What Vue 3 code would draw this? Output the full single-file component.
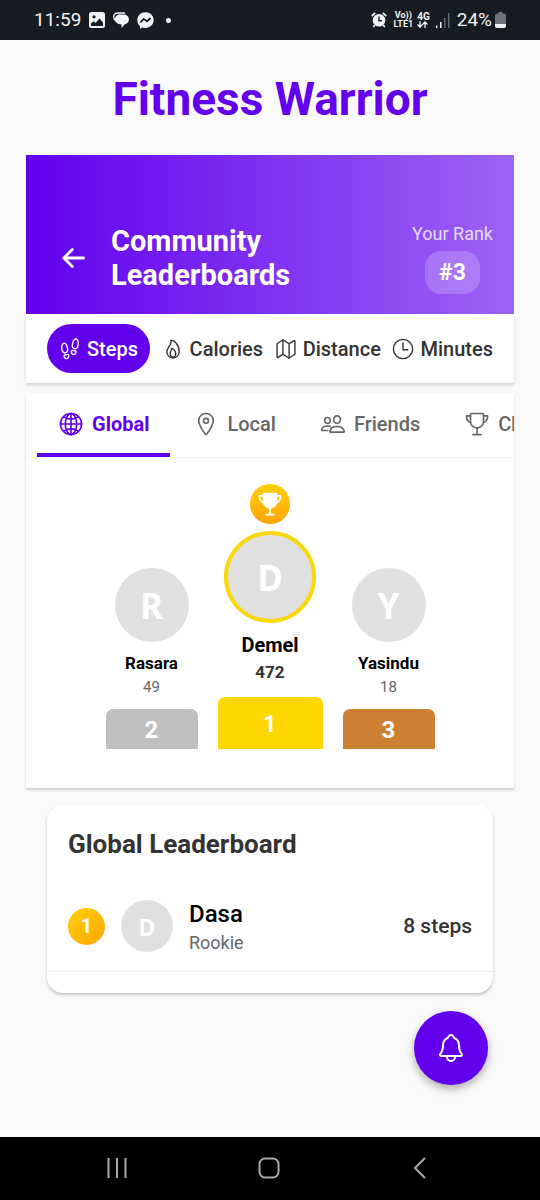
<script setup>
import { ref } from 'vue'

const icons = {
  footsteps: [
    'M200 246.84c8.81 58.62-7.33 90.67-52.91 97.41-50.65 7.49-71.52-26.44-80.33-84.84-11.84-78.56 11.66-134.25 49-139.41 47.33-6.53 74.87 55.87 84.24 126.84z',
    'M223.65 409.53c3.13 33.28-14.86 64.34-42 69.66-27.4 5.36-58.71-16.37-65.09-49.19s17.75-34.56 47.32-40.21 55.99-20.4 59.77 19.74z',
    'M312 150.83c-8.81 58.62 7.33 90.67 52.9 97.41 50.66 7.49 71.52-26.44 80.33-84.84 11.84-78.55-11.66-134.25-49-139.41C348.92 17.46 321.37 79.87 312 150.83z',
    'M288.35 313.53c-3.13 33.27 14.86 64.34 42 69.69 27.4 5.36 58.71-16.37 65.09-49.19s-17.75-34.56-47.32-40.22-55.99-20.4-59.77 19.72z'
  ],
  flame: [
    'M112 320c0-93 124-165 96-272 66 0 192 96 192 272a144 144 0 01-288 0z',
    'M320 368c0 57.71-32 80-64 80s-64-22.29-64-80 40-86 32-128c42 0 96 70.29 96 128z'
  ],
  map: [
    'M313.27 124.64L198.73 51.36a32 32 0 00-29.28.35L56.51 127.49A16 16 0 0048 141.63v295.8a16 16 0 0023.49 14.14l97.82-63.79a32 32 0 0129.5-.24l111.86 73a32 32 0 0029.27-.11l115.43-75.94a16 16 0 008.63-14.2V74.57a16 16 0 00-23.49-14.14l-98 63.86a32 32 0 01-29.24.35z',
    'M328 128v336M184 48v336'
  ],
  clock: [
    'M256 32C133 32 32 133 32 256s101 224 224 224 224-101 224-224S379 32 256 32z',
    'M256 112v160h110'
  ],
  globe: [
    'M256 48C141.13 48 48 141.13 48 256s93.13 208 208 208 208-93.13 208-208S370.87 48 256 48z',
    'M256 48c-58.07 0-112.67 93.31-112.67 208S197.93 464 256 464s112.67-93.31 112.67-208S314.07 48 256 48z',
    'M117.33 117.33c38.24 27.15 86.38 43.34 138.67 43.34s100.43-16.19 138.67-43.34M394.67 394.67c-38.24-27.15-86.38-43.34-138.67-43.34s-100.43 16.19-138.67 43.34',
    'M256 48v416M464 256H48'
  ],
  pin: [
    'M256 48c-79.5 0-144 61.39-144 137 0 87 96 224.87 131.25 272.49a15.77 15.77 0 0025.5 0C304 409.89 400 272.07 400 185c0-75.61-64.5-137-144-137z',
    'M304 192a48 48 0 11-96 0 48 48 0 0196 0z'
  ],
  people: [
    'M402 168c-2.93 40.67-33.1 72-66 72s-63.12-31.32-66-72c-3-42.31 26.37-72 66-72s69 30.46 66 72z',
    'M336 304c-65.17 0-127.84 32.37-143.54 95.41-2.08 8.34 3.15 16.59 11.72 16.59h263.65c8.57 0 13.77-8.25 11.72-16.59C463.85 335.36 401.18 304 336 304z',
    'M200 185.94c-2.34 32.48-26.72 58.06-53 58.06s-50.7-25.57-53-58.06C91.61 152.15 115.34 128 147 128s55.39 24.77 53 57.94zM206 306c-18.05-8.27-37.93-11.45-59-11.45-52 0-102.1 25.85-114.65 76.2-1.65 6.66 2.53 13.25 9.37 13.25H154'
  ],
  trophy: [
    'M176 464h160M256 464V336',
    'M384 224c0-50.64-.08-134.63-.12-160a16 16 0 00-16-16l-223.79.26a16 16 0 00-16 15.95c0 30.58-.13 129.17-.13 159.79 0 64.28 83 112 128 112S384 288.28 384 224z',
    'M128 96H48v16c0 55.22 33.55 112 80 112M384 96h80v16c0 55.22-33.55 112-80 112'
  ]
}

const metrics = [
  { label: 'Steps', icon: 'footsteps' },
  { label: 'Calories', icon: 'flame' },
  { label: 'Distance', icon: 'map' },
  { label: 'Minutes', icon: 'clock' }
]
const scopes = [
  { label: 'Global', icon: 'globe' },
  { label: 'Local', icon: 'pin' },
  { label: 'Friends', icon: 'people' },
  { label: 'Challenges', icon: 'trophy' }
]
const podium = [
  { name: 'Rasara', score: 49, place: 2, tone: 'silver' },
  { name: 'Demel', score: 472, place: 1, tone: 'gold' },
  { name: 'Yasindu', score: 18, place: 3, tone: 'bronze' }
]
const entries = [{ rank: 1, name: 'Dasa', level: 'Rookie', score: '8 steps' }]

const metric = ref('Steps')
const scope = ref('Global')
</script>

<template>
  <div class="phone">
    <div class="status">
      <div class="status-group">
        <span class="time">11:59</span>
        <svg width="16" height="16" viewBox="0 0 16 16">
          <path fill="#f2f3f5" fill-rule="evenodd" d="M2.5 0h11A2.5 2.5 0 0116 2.500v11a2.500 2.500 0 01-2.500 2.500h-11A2.500 2.500 0 010 13.500v-11A2.500 2.500 0 012.500 0zM2 11.500V14h12v-3.500l-3.500-4-4 4.500-2-1.800zM5 3.200a1.600 1.600 0 100 3.200 1.600 1.600 0 000-3.200z" />
        </svg>
        <svg width="16" height="16" viewBox="0 0 16 16">
          <path fill="#f2f3f5" d="M7 2.500h3.500c3.200 0 5.500 2 5.500 5 0 2.600-1.900 4.500-4.500 5L8.500 16v-3.500C4.500 12.200 1.800 10 1.800 7.500c0-3 2.200-5 5.200-5z" />
          <path fill="none" stroke="#f2f3f5" stroke-width="1.300" d="M12 1H5C2 1 .7 2.500.7 4.600c0 1.500.7 2.900 1.500 3.700" />
        </svg>
        <svg width="17" height="17" viewBox="0 0 17 17">
          <path fill="#f2f3f5" d="M8.500.3C3.800.3.3 3.800.3 8.200c0 2.400 1 4.500 2.700 6v2.500l2.600-1.200c.9.300 1.900.4 2.900.4 4.700 0 8.200-3.400 8.200-7.800S13.200.3 8.500.3z" />
          <path fill="none" stroke="#171b22" stroke-width="1.800" stroke-linejoin="round" d="M3.500 10.500l3.200-3.600 3.300 2.500L13.500 6" />
        </svg>
        <span class="dot"></span>
      </div>
      <div class="status-group right">
        <svg width="16" height="16" viewBox="0 0 16 16">
          <circle cx="8" cy="8.300" r="6.300" fill="#f2f3f5" />
          <path fill="none" stroke="#f2f3f5" stroke-width="1.700" d="M.8 4L4.200.9M15.200 4L11.800.9M3.800 13l-1.600 2M12.200 13l1.600 2" />
          <path fill="none" stroke="#171b22" stroke-width="1.400" d="M8 4.500v4.200h3" />
        </svg>
        <span class="tiny">Vo))<br />LTE1</span>
        <span class="tiny network">4G
          <svg width="11" height="7" viewBox="0 0 11 7">
            <path fill="none" stroke="#f2f3f5" stroke-width="1.300" d="M3 0v6M.5 3.500L3 6l2.500-2.500M8 7V1M5.500 3.500L8 1l2.500 2.500" />
          </svg>
        </span>
        <svg width="14" height="15" viewBox="0 0 14 15">
          <path fill="#f2f3f5" d="M0 12.500h1.500V15H0zM4 9h1.500v6H4z" />
          <path fill="#626870" d="M8 5h1.500v10H8zM12 0h1.500v15H12z" />
        </svg>
        <span class="time battery-text">24%</span>
        <svg width="11" height="16" viewBox="0 0 11 16">
          <path fill="#70747a" d="M3.500 0h4v1.500H9a2 2 0 012 2V12H0V3.500a2 2 0 012-2h1.500z" />
          <path fill="#f2f3f5" d="M0 12h11v2a2 2 0 01-2 2H2a2 2 0 01-2-2z" />
        </svg>
      </div>
    </div>

    <main class="content">
      <h1 class="brand">Fitness Warrior</h1>

      <header class="hero">
        <button class="back" type="button" aria-label="Back">
          <svg width="30" height="30" viewBox="0 0 512 512">
            <path class="line heavy" d="M244 400L100 256l144-144M106 256h330" />
          </svg>
        </button>
        <h2 class="hero-title">Community Leaderboards</h2>
        <div class="my-rank">
          <span class="my-rank-label">Your Rank</span>
          <strong class="my-rank-value">#3</strong>
        </div>
      </header>

      <div class="metrics">
        <button
          v-for="m in metrics"
          :key="m.label"
          type="button"
          class="metric"
          :class="{ active: metric === m.label }"
          :aria-pressed="metric === m.label"
          @click="metric = m.label"
        >
          <svg class="metric-icon" viewBox="0 0 512 512">
            <path v-for="d in icons[m.icon]" :key="d" class="line" :d="d" />
          </svg>
          {{ m.label }}
        </button>
      </div>

      <section class="board">
        <div class="tabs" role="tablist">
          <button
            v-for="s in scopes"
            :key="s.label"
            type="button"
            role="tab"
            class="tab"
            :class="{ active: scope === s.label }"
            :aria-selected="scope === s.label"
            @click="scope = s.label"
          >
            <svg class="tab-icon" viewBox="0 0 512 512">
              <path v-for="d in icons[s.icon]" :key="d" class="line" :d="d" />
            </svg>
            {{ s.label }}
          </button>
        </div>

        <div class="podium">
          <div v-for="p in podium" :key="p.name" class="column" :class="p.tone">
            <span v-if="p.place === 1" class="crown">
              <svg width="26" height="26" viewBox="0 0 512 512">
                <path class="line" :d="icons.trophy[0]" />
                <path class="line cup" :d="icons.trophy[1]" />
                <path class="line" :d="icons.trophy[2]" />
              </svg>
            </span>
            <span class="avatar">{{ p.name[0] }}</span>
            <span class="name">{{ p.name }}</span>
            <span class="score">{{ p.score }}</span>
            <span class="block">{{ p.place }}</span>
          </div>
        </div>
      </section>

      <section class="card">
        <h3 class="card-title">Global Leaderboard</h3>
        <ol class="entries">
          <li v-for="e in entries" :key="e.rank" class="entry">
            <span class="medal">{{ e.rank }}</span>
            <span class="avatar small">{{ e.name[0] }}</span>
            <span class="person">
              <span class="person-name">{{ e.name }}</span>
              <span class="person-level">{{ e.level }}</span>
            </span>
            <span class="entry-score">{{ e.score }}</span>
          </li>
        </ol>
      </section>

      <button class="fab" type="button" aria-label="Notifications">
        <svg width="32" height="32" viewBox="0 0 512 512">
          <path class="line" d="M427.68 351.43C402 320 383.87 304 383.87 217.35 383.87 138 343.35 109.73 310 96c-4.43-1.82-8.600-6-9.950-10.550C294.200 65.540 277.800 48 256 48s-38.210 17.550-44 37.470c-1.350 4.600-5.520 8.710-9.950 10.530-33.390 13.750-73.870 41.920-73.870 121.350C128.130 304 110 320 84.320 351.430 73.680 364.450 83 384 101.610 384h308.880c18.510 0 27.770-19.610 17.190-32.570zM320 384v16a64 64 0 01-128 0v-16" />
        </svg>
      </button>
    </main>

    <nav class="sysnav">
      <button type="button" aria-label="Recent apps">
        <svg width="24" height="24" viewBox="0 0 24 24">
          <path class="nav-line" d="M3.500 2v20M12 2v20M20.500 2v20" />
        </svg>
      </button>
      <button type="button" aria-label="Home">
        <svg width="24" height="24" viewBox="0 0 24 24">
          <rect class="nav-line" x="2.500" y="2.500" width="19" height="19" rx="5.500" />
        </svg>
      </button>
      <button type="button" aria-label="Back">
        <svg width="24" height="24" viewBox="0 0 24 24">
          <path class="nav-line" d="M17 2L7 12l10 10" />
        </svg>
      </button>
    </nav>
  </div>
</template>

<style>
body {
  background: #f9f9f9;
}
</style>

<style scoped>
.phone {
  display: flex;
  flex-direction: column;
  min-height: 100vh;
  background: #f9f9f9;
  font-family: Roboto, "Liberation Sans", sans-serif;
  color: #000;
}
.phone * {
  box-sizing: border-box;
}
button {
  margin: 0;
  padding: 0;
  border: 0;
  background: none;
  font: inherit;
  color: inherit;
  cursor: pointer;
}
svg {
  display: block;
  flex: none;
}
.line {
  fill: none;
  stroke: currentColor;
  stroke-width: 32;
  stroke-linecap: round;
  stroke-linejoin: round;
}
.heavy {
  stroke-width: 48;
}

.status {
  display: flex;
  justify-content: space-between;
  align-items: center;
  height: 40px;
  padding: 0 34px;
  background: #171b22;
  color: #f2f3f5;
}
.status-group {
  display: flex;
  align-items: center;
  gap: 8px;
}
.right {
  gap: 6px;
}
.time {
  font-size: 19px;
  line-height: 24px;
}
.battery-text {
  margin: 0 -3px 0 1px;
}
.dot {
  width: 5px;
  height: 5px;
  margin-left: 4px;
  border-radius: 50%;
  background: #f2f3f5;
}
.tiny {
  font-size: 9px;
  line-height: 9px;
  font-weight: 700;
  text-align: center;
}
.network {
  margin-left: -2px;
  font-size: 10px;
}

.content {
  position: relative;
  flex: 1;
  padding: 32px 26px 120px;
}
.brand {
  margin: 0 0 29px;
  font-size: 46px;
  line-height: 54px;
  font-weight: 700;
  text-align: center;
  color: #6200ee;
}

.hero {
  display: flex;
  align-items: center;
  padding: 67px 21px 20px;
  background: linear-gradient(90deg, #6200ee, #9d63f5);
  color: #fff;
}
.back {
  padding: 11px;
  margin-right: 12px;
}
.hero-title {
  flex: 1;
  margin: 0;
  font-size: 29px;
  line-height: 34px;
  font-weight: 700;
}
.my-rank {
  display: flex;
  flex-direction: column;
  align-items: center;
  gap: 5px;
}
.my-rank-label {
  font-size: 18px;
  line-height: 24px;
  color: rgba(255, 255, 255, 0.8);
}
.my-rank-value {
  padding: 8px 14px;
  border-radius: 16px;
  background: rgba(255, 255, 255, 0.2);
  font-size: 23px;
  line-height: 27px;
}

.metrics {
  display: flex;
  justify-content: space-between;
  align-items: center;
  margin-bottom: 10px;
  padding: 10px 21px;
  background: #fff;
  box-shadow: 0 2px 3px rgba(0, 0, 0, 0.16);
}
.metric {
  display: flex;
  align-items: center;
  gap: 6px;
  height: 49px;
  padding-top: 1px;
  font-size: 20px;
  line-height: 24px;
  font-weight: 500;
  color: #333;
}
.metric.active {
  padding: 1px 12px 0;
  border-radius: 25px;
  background: #6200ee;
  color: #fff;
}
.metric-icon {
  width: 22px;
  height: 22px;
}

.board {
  background: #fff;
  box-shadow: 0 2px 2px rgba(0, 0, 0, 0.18);
}
.tabs {
  display: flex;
  gap: 2px;
  overflow-x: auto;
  scrollbar-width: none;
  padding-left: 11px;
  border-bottom: 1px solid #f5f5f5;
}
.tab {
  display: flex;
  flex: none;
  align-items: center;
  gap: 8px;
  height: 64px;
  padding: 2px 21px 0;
  border-bottom: 4px solid transparent;
  font-size: 20px;
  line-height: 24px;
  font-weight: 500;
  color: #666;
}
.tab.active {
  border-bottom-color: #6200ee;
  font-weight: 700;
  color: #6200ee;
}
.tab-icon {
  width: 26px;
  height: 26px;
}

.podium {
  display: flex;
  justify-content: center;
  align-items: flex-end;
  gap: 20px;
  padding: 26px 21px 39px;
}
.column {
  display: flex;
  flex-direction: column;
  align-items: center;
  width: 92px;
}
.column.gold {
  width: 105px;
}
.crown {
  display: flex;
  align-items: center;
  justify-content: center;
  width: 40px;
  height: 40px;
  margin-bottom: 7px;
  border-radius: 50%;
  background: linear-gradient(#ffd000, #ffa50a);
  color: #fff;
}
.cup {
  fill: currentColor;
}
.avatar {
  display: flex;
  align-items: center;
  justify-content: center;
  flex: none;
  width: 74px;
  height: 74px;
  padding-top: 2px;
  border-radius: 50%;
  background: #e0e0e0;
  font-family: "Noto Sans", sans-serif;
  font-size: 35px;
  line-height: 40px;
  font-weight: 700;
  color: #fff;
}
.gold .avatar {
  width: 92px;
  height: 92px;
  border: 4px solid #f8d70b;
}
.name {
  margin-top: 9px;
  font-size: 17px;
  line-height: 24px;
  font-weight: 700;
}
.gold .name {
  margin-top: 10px;
  font-size: 20px;
}
.score {
  font-size: 15px;
  line-height: 24px;
  color: #666;
}
.gold .score {
  margin: 3px 0;
  font-size: 17px;
  font-weight: 700;
  color: #333;
}
.block {
  display: flex;
  align-items: center;
  justify-content: center;
  width: 100%;
  height: 40px;
  margin-top: 10px;
  padding-top: 1px;
  border-radius: 7px 7px 0 0;
  background: #c0c0c0;
  font-size: 24px;
  line-height: 28px;
  font-weight: 700;
  color: #fff;
}
.gold .block {
  height: 52px;
  background: #ffd700;
}
.bronze .block {
  background: #cd7f32;
}

.card {
  margin: 17px 21px 0;
  padding: 21px 0;
  border-radius: 16px;
  background: #fff;
  box-shadow: 0 2px 3px rgba(0, 0, 0, 0.22);
}
.card-title {
  margin: 0 21px 19px;
  font-size: 26px;
  line-height: 36px;
  font-weight: 700;
  color: #333;
}
.entries {
  margin: 0;
  padding: 0;
  list-style: none;
}
.entry {
  display: flex;
  align-items: center;
  gap: 16px;
  padding: 15px 21px;
  border-bottom: 1px solid #eee;
}
.medal {
  display: flex;
  align-items: center;
  justify-content: center;
  width: 37px;
  height: 37px;
  border-radius: 50%;
  background: linear-gradient(135deg, #ffd000, #ffa50a);
  font-size: 20px;
  line-height: 24px;
  font-weight: 700;
  color: #fff;
}
.avatar.small {
  width: 52px;
  height: 52px;
  padding-top: 1px;
  font-size: 23px;
}
.person {
  display: flex;
  flex: 1;
  flex-direction: column;
  padding-top: 3px;
}
.person-name {
  font-size: 24px;
  line-height: 30px;
  font-weight: 500;
}
.person-level {
  font-size: 18px;
  line-height: 27px;
  color: #666;
}
.entry-score {
  font-size: 21px;
  line-height: 24px;
  font-weight: 500;
  color: #333;
}

.fab {
  position: absolute;
  right: 52px;
  bottom: 52px;
  display: flex;
  align-items: center;
  justify-content: center;
  width: 74px;
  height: 74px;
  border-radius: 50%;
  background: #6200ee;
  color: #fff;
  box-shadow: 0 4px 8px rgba(0, 0, 0, 0.3);
}

.sysnav {
  display: flex;
  align-items: center;
  justify-content: space-between;
  height: 63px;
  padding: 0 108px 2px 105px;
  background: #000;
}
.nav-line {
  fill: none;
  stroke: #aaa;
  stroke-width: 2;
}
</style>
